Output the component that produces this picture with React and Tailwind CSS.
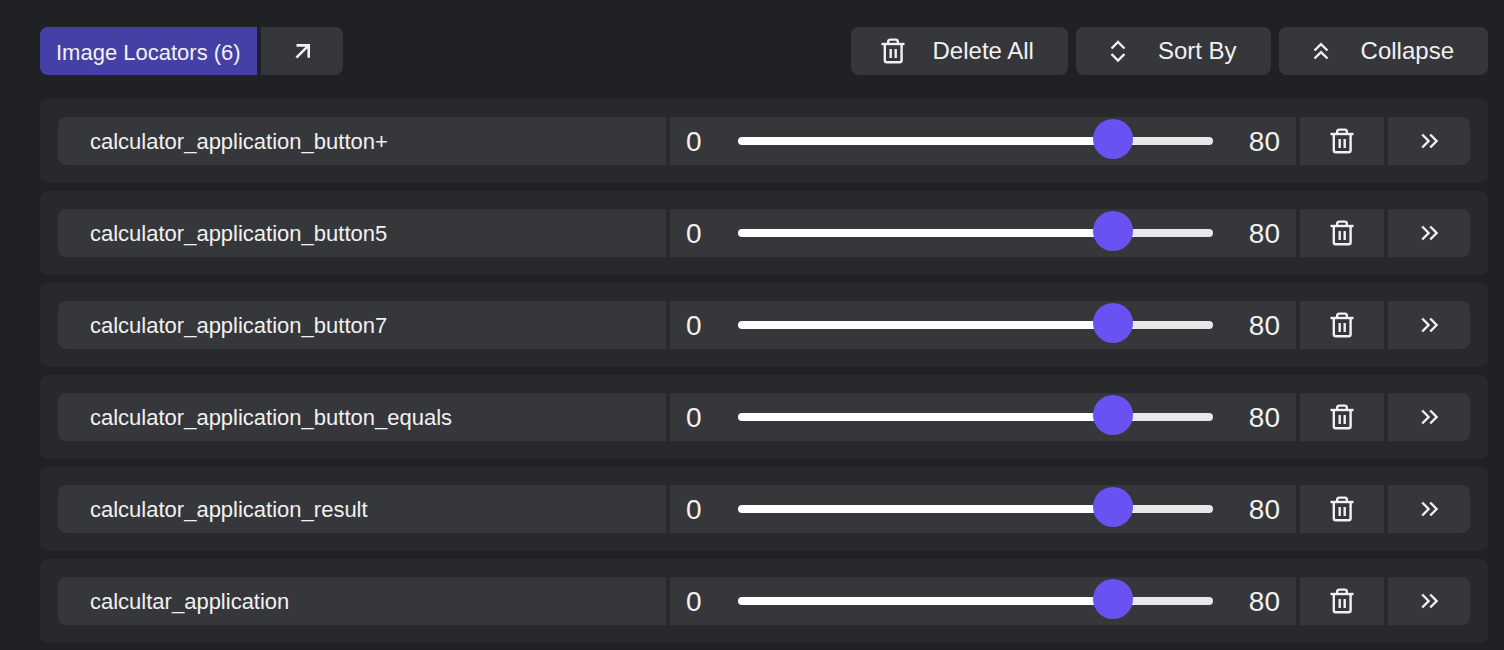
import React, { useState } from "react";

const initialLocators = [
  { id: 1, name: "calculator_application_button+", threshold: 80 },
  { id: 2, name: "calculator_application_button5", threshold: 80 },
  { id: 3, name: "calculator_application_button7", threshold: 80 },
  { id: 4, name: "calculator_application_button_equals", threshold: 80 },
  { id: 5, name: "calculator_application_result", threshold: 80 },
  { id: 6, name: "calcultar_application", threshold: 80 },
];

function Icon({ children }) {
  return (
    <svg
      className="h-7 w-7 shrink-0"
      viewBox="0 0 28 28"
      fill="none"
      stroke="currentColor"
      strokeWidth="2.4"
      aria-hidden="true"
    >
      {children}
    </svg>
  );
}

const TrashIcon = () => (
  <Icon>
    <path d="M2.5 7h23" />
    <path d="M9.2 7V4.6a2 2 0 0 1 2-2h5.6a2 2 0 0 1 2 2V7" />
    <path d="M5.8 7v16.3a2 2 0 0 0 2 2h12.8a2 2 0 0 0 2-2V7" />
    <path d="M11.7 12v9M16.7 12v9" />
  </Icon>
);

const ArrowIcon = () => (
  <Icon>
    <path d="M8.5 8.4h12.2v12.4M20.4 8.7L8.4 20.6" strokeWidth="2.6" />
  </Icon>
);

const SortIcon = () => (
  <Icon>
    <path d="M7.5 11.5L14 5l6.5 6.5M7.5 17L14 23.5l6.5-6.5" />
  </Icon>
);

const CollapseIcon = () => (
  <Icon>
    <path d="M7.5 13.5L14 7.2l6.5 6.3M7.5 21.5L14 15.2l6.5 6.3" />
  </Icon>
);

const ExpandIcon = () => (
  <Icon>
    <path d="M7.2 7.5l6.4 6.5-6.4 6.5M15.2 7.5l6.4 6.5-6.4 6.5" />
  </Icon>
);

function ToolbarButton({ icon, label, onClick }) {
  return (
    <button
      onClick={onClick}
      className="flex h-12 items-center gap-[26px] rounded-lg bg-[#36373b] pr-[34px] pl-7 text-2xl hover:bg-[#3f4045]"
    >
      {icon}
      <span>{label}</span>
    </button>
  );
}

function LocatorRow({ locator, onChange, onDelete }) {
  const { name, threshold } = locator;
  return (
    <li className="flex gap-1 rounded-lg bg-[#28292c] p-[18px]">
      <input
        type="text"
        aria-label="Locator name"
        value={name}
        onChange={(e) => onChange({ ...locator, name: e.target.value })}
        className="h-12 min-w-0 grow basis-[608px] rounded-l-lg bg-[#36373b] px-8 pt-0.5 text-[22px] outline-none"
      />
      <label className="flex h-12 min-w-0 grow basis-[626px] items-center gap-9 bg-[#36373b] px-4 text-[28px]">
        <span className="pt-0.5">0</span>
        <input
          type="range"
          min="0"
          max="100"
          aria-label={`${name} threshold`}
          value={threshold}
          onChange={(e) =>
            onChange({ ...locator, threshold: Number(e.target.value) })
          }
          style={{
            backgroundImage: `linear-gradient(to right, #ffffff ${threshold}%, #e8e8e8 ${threshold}%)`,
          }}
          className="h-2 min-w-0 flex-1 cursor-pointer appearance-none rounded-full outline-none [&::-webkit-slider-runnable-track]:h-2 [&::-webkit-slider-thumb]:-mt-1.5 [&::-webkit-slider-thumb]:h-4 [&::-webkit-slider-thumb]:w-4 [&::-webkit-slider-thumb]:scale-250 [&::-webkit-slider-thumb]:appearance-none [&::-webkit-slider-thumb]:rounded-full [&::-webkit-slider-thumb]:bg-[#6952f2]"
        />
        <span className="pt-0.5">{threshold}</span>
      </label>
      <button
        aria-label={`Delete ${name}`}
        onClick={onDelete}
        className="flex h-12 w-21 shrink-0 items-center justify-center bg-[#36373b] hover:bg-[#3f4045]"
      >
        <TrashIcon />
      </button>
      <button
        aria-label={`Expand ${name}`}
        className="flex h-12 w-[82px] shrink-0 items-center justify-center rounded-r-lg bg-[#36373b] hover:bg-[#3f4045]"
      >
        <ExpandIcon />
      </button>
    </li>
  );
}

export default function App() {
  const [locators, setLocators] = useState(initialLocators);

  const updateLocator = (updated) =>
    setLocators(locators.map((l) => (l.id === updated.id ? updated : l)));

  const sortLocators = () =>
    setLocators([...locators].sort((a, b) => a.name.localeCompare(b.name)));

  return (
    <main className="min-h-screen bg-[#202124] pt-[27px] pr-4 pb-1 pl-10 font-['Liberation_Sans',Arial,sans-serif] text-[#f1f1f1]">
      {/* Toolbar */}
      <header className="mb-6 flex items-center justify-between">
        <div className="flex gap-1">
          <button className="h-12 rounded-l-lg bg-[#4540a6] px-4 pt-0.5 text-[22px]">
            Image Locators ({locators.length})
          </button>
          <button
            aria-label="Open image locators"
            className="flex h-12 w-[82px] items-center justify-center rounded-r-lg bg-[#36373b] hover:bg-[#3f4045]"
          >
            <ArrowIcon />
          </button>
        </div>
        <div className="flex gap-2">
          <ToolbarButton
            icon={<TrashIcon />}
            label="Delete All"
            onClick={() => setLocators([])}
          />
          <ToolbarButton
            icon={<SortIcon />}
            label="Sort By"
            onClick={sortLocators}
          />
          <ToolbarButton icon={<CollapseIcon />} label="Collapse" />
        </div>
      </header>

      {/* Locators */}
      <ul className="flex flex-col gap-2">
        {locators.map((locator) => (
          <LocatorRow
            key={locator.id}
            locator={locator}
            onChange={updateLocator}
            onDelete={() =>
              setLocators(locators.filter((l) => l.id !== locator.id))
            }
          />
        ))}
      </ul>
    </main>
  );
}
